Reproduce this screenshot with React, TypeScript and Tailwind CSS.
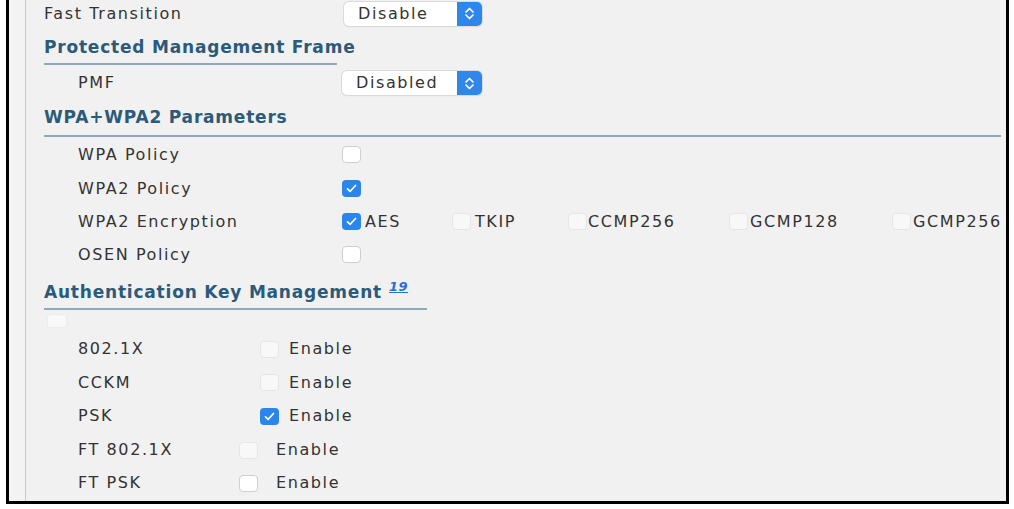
const font = { fontFamily: '"DejaVu Sans", Verdana, sans-serif' };

function Chevrons() {
  return (
    <svg width="11" height="17" viewBox="0 0 11 17" fill="none">
      <path d="M2 7 L5.5 3.5 L9 7" stroke="white" strokeWidth="1.7" strokeLinecap="round" strokeLinejoin="round" />
      <path d="M2 10 L5.5 13.5 L9 10" stroke="white" strokeWidth="1.7" strokeLinecap="round" strokeLinejoin="round" />
    </svg>
  );
}

function Select({ value, width }: { value: string; width: string }) {
  return (
    <div className={`flex h-[24px] ${width} rounded-[5px] bg-white shadow-[0_0_0_1px_#dadada,0_1px_1px_#cfcfcf]`}>
      <span className="flex-1 pl-[14px] leading-[24px]">{value}</span>
      <div className="flex w-[25px] items-center justify-center rounded-r-[5px] bg-[#2f87ec]">
        <Chevrons />
      </div>
    </div>
  );
}

function Box({ checked, faint }: { checked?: boolean; faint?: boolean }) {
  if (checked) {
    return (
      <div className="flex h-[17px] w-[19px] shrink-0 items-center justify-center rounded-[4px] bg-[#2b86eb]">
        <svg width="11" height="9" viewBox="0 0 11 9" fill="none">
          <path d="M1.5 4.8 L4.2 7.3 L9.5 1.5" stroke="white" strokeWidth="1.7" strokeLinecap="round" strokeLinejoin="round" />
        </svg>
      </div>
    );
  }
  return (
    <div
      className={
        faint
          ? 'h-[17px] w-[19px] shrink-0 rounded-[4px] border border-[#e6e6e6] bg-[#f8f8f8]'
          : 'h-[17px] w-[19px] shrink-0 rounded-[4px] border border-[#cfcfcf] bg-white'
      }
    />
  );
}

function Heading({ children }: { children: React.ReactNode }) {
  return <div className="text-[17px] font-bold leading-[18px] tracking-[0.8px] text-[#2b5a7a]">{children}</div>;
}

function Row({ label, h, children }: { label: string; h: string; children?: React.ReactNode }) {
  return (
    <div className={`flex ${h} items-center pl-[34px]`}>
      <span className="w-[264px] shrink-0">{label}</span>
      {children}
    </div>
  );
}

function AuthRow({ label, h, col, gap, checked, faint }: { label: string; h: string; col: string; gap: string; checked?: boolean; faint?: boolean }) {
  return (
    <div className={`flex ${h} items-center pl-[34px]`}>
      <span className={`${col} shrink-0`}>{label}</span>
      <Box checked={checked} faint={faint} />
      <span className={gap}>Enable</span>
    </div>
  );
}

export default function App() {
  return (
    <div className="h-[509px] w-[1014px] overflow-hidden bg-white" style={font}>
      <div className="ml-[6px] flex h-[504px] w-[1003px] overflow-hidden border-x-[3px] border-b-[3px] border-black bg-[#f1f1f1] text-[16px] tracking-[1.6px] text-[#333]">
        <div className="w-[17px] shrink-0 border-r border-[#c9c9c9] bg-[#f3f3f3]" />
        <div className="flex flex-1 flex-col pl-[18px]">
          <div className="flex h-[26px] items-center pt-[1px]">
            <span className="w-[300px] shrink-0">Fast Transition</span>
            <Select value="Disable" width="w-[138px]" />
          </div>

          <div className="pt-[12px] pb-[7px]">
            <Heading>Protected Management Frame</Heading>
          </div>
          <div className="h-[2px] w-[293px] bg-[#8fa9b9]" />

          <Row label="PMF" h="h-[36px]">
            <Select value="Disabled" width="w-[140px]" />
          </Row>

          <div className="pt-[7px] pb-[9px]">
            <Heading>WPA+WPA2 Parameters</Heading>
          </div>
          <div className="h-[2px] w-[957px] bg-[#8fa9b9]" />

          <Row label="WPA Policy" h="h-[35px]">
            <Box />
          </Row>
          <Row label="WPA2 Policy" h="h-[33px]">
            <Box checked />
          </Row>
          <Row label="WPA2 Encryption" h="h-[33px]">
            <div className="flex w-[110px] items-center gap-[4px]">
              <Box checked />
              <span>AES</span>
            </div>
            <div className="flex w-[116px] items-center gap-[4px]">
              <Box faint />
              <span>TKIP</span>
            </div>
            <div className="flex w-[161px] items-center gap-[1px]">
              <Box faint />
              <span>CCMP256</span>
            </div>
            <div className="flex w-[163px] items-center gap-[2px]">
              <Box faint />
              <span>GCMP128</span>
            </div>
            <div className="flex items-center gap-[2px]">
              <Box faint />
              <span>GCMP256</span>
            </div>
          </Row>
          <Row label="OSEN Policy" h="h-[33px]">
            <Box />
          </Row>

          <div className="flex items-start pt-[12px] pb-[7px]">
            <Heading>Authentication Key Management</Heading>
            <a className="ml-[7px] -mt-[4px] text-[13px] font-bold italic leading-[15px] tracking-[0.5px] text-[#2a6fd0] underline">
              19
            </a>
          </div>
          <div className="h-[2px] w-[383px] bg-[#8fa9b9]" />

          <div className="h-[22px] pl-[3px] pt-[4px]">
            <div className="h-[14px] w-[20px] rounded-[3px] border border-[#ececec] bg-[#f9f9f9]" />
          </div>

          <AuthRow label="802.1X" h="h-[34px]" col="w-[182px]" gap="ml-[10px]" faint />
          <AuthRow label="CCKM" h="h-[33px]" col="w-[182px]" gap="ml-[10px]" faint />
          <AuthRow label="PSK" h="h-[34px]" col="w-[182px]" gap="ml-[10px]" checked />
          <AuthRow label="FT 802.1X" h="h-[34px]" col="w-[161px]" gap="ml-[18px]" faint />
          <AuthRow label="FT PSK" h="h-[32px]" col="w-[161px]" gap="ml-[18px]" />
        </div>
      </div>
    </div>
  );
}
